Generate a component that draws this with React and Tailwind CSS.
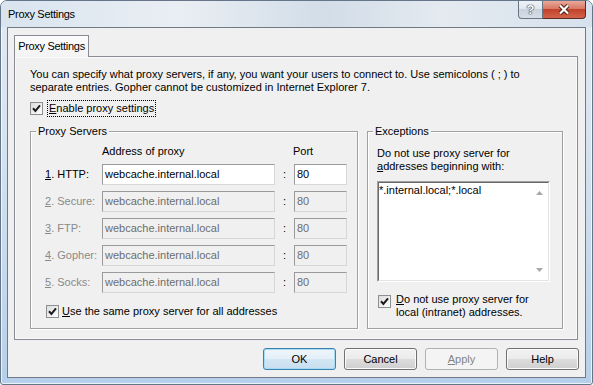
import React from 'react';

const font = "font-['Liberation_Sans',Arial,sans-serif]";

function Check() {
  return (
    <div className="w-[13px] h-[13px] shrink-0 border border-[#8e8f8f] bg-gradient-to-br from-[#dcdcdc] to-white flex items-center justify-center">
      <svg width="9" height="9" viewBox="0 0 9 9">
        <path d="M1 4.3L3.4 6.9L8 1.4" fill="none" stroke="#1c1c1c" strokeWidth="2" />
      </svg>
    </div>
  );
}

function Field({ value, disabled, className = '' }) {
  return (
    <div
      className={`h-[21px] flex items-center pl-[2px] border border-t-[#9a9a9a] border-l-[#9a9a9a] border-r-[#d6d6d6] border-b-[#d6d6d6] whitespace-nowrap ${
        disabled ? 'bg-[#f0f0f0] text-[#6d6d6d]' : 'bg-white text-black'
      } ${className}`}
    >
      {value}
    </div>
  );
}

function Btn({ children, isDefault, disabled }) {
  let look =
    'border-[#707070] bg-[linear-gradient(180deg,#f2f2f2_0%,#ebebeb_50%,#dddddd_50%,#cfcfcf_100%)] shadow-[inset_0_0_0_1px_#fbfbfb] text-black';
  if (isDefault)
    look =
      'border-[#3c7fb1] bg-[linear-gradient(180deg,#eef6fb_0%,#e4eff7_50%,#d3e6f3_50%,#c8def0_100%)] shadow-[inset_0_0_0_1px_#a6dcf5] text-black';
  if (disabled) look = 'border-[#adb2b5] bg-[#f4f4f4] text-[#838383]';
  return (
    <div className={`w-[73px] h-[22px] rounded-[3px] border flex items-center justify-center ${look}`}>
      {children}
    </div>
  );
}

function Group({ title, className = '', children }) {
  return (
    <div
      className={`relative h-[198px] border border-[#a0a0a0] shadow-[inset_1px_1px_0_#fff,1px_1px_0_#fff] ${className}`}
    >
      <span className="absolute -top-[7px] left-[5px] px-[2px] bg-[#f0f0f0] leading-[13px]">{title}</span>
      {children}
    </div>
  );
}

const rows = [
  { n: '1', label: '. HTTP:', on: true },
  { n: '2', label: '. Secure:' },
  { n: '3', label: '. FTP:' },
  { n: '4', label: '. Gopher:' },
  { n: '5', label: '. Socks:' },
];

export default function App() {
  return (
    <div
      className={`w-[593px] h-[385px] flex flex-col overflow-hidden rounded-t-[7px] rounded-b-[3px] border border-[#65768a] bg-[linear-gradient(180deg,#e2eaf2_0%,#d4e2f0_40%,#b6cfea_100%)] shadow-[inset_0_0_0_1px_rgba(255,255,255,0.7)] text-[11px] text-black ${font}`}
    >
      <div className="h-[26px] flex justify-between pl-[7px] pr-[6px] bg-[linear-gradient(90deg,#d9e4ef_0%,#e9eef3_30%,#d2dde8_55%,#e4eaf0_75%,#d6e1ed_100%)]">
        <div className="self-center leading-[14px] tracking-[-0.3px]">Proxy Settings</div>
        <div className="flex self-start h-[18px]">
          <div className="w-[25px] h-[18px] rounded-bl-[4px] border border-t-0 border-[#6a7684] bg-[linear-gradient(180deg,#eef2f6_0%,#dfe6ed_50%,#c9d3de_50%,#d6dee7_100%)] flex items-center justify-center text-[13px] font-bold text-white [text-shadow:0_0_1px_#2b3440,0_0_1px_#2b3440,0_0_1px_#2b3440]">
            ?
          </div>
          <div className="w-[43px] h-[18px] rounded-br-[4px] border border-t-0 border-l-0 border-[#5b2a22] bg-[linear-gradient(180deg,#e9a99b_0%,#d7735f_50%,#c2432b_50%,#d4624a_100%)] flex items-center justify-center">
            <svg width="14" height="11" viewBox="0 0 14 11">
              <path d="M3 1.5L11 9.5M11 1.5L3 9.5" stroke="#4a1c14" strokeWidth="4" />
              <path d="M3 1.5L11 9.5M11 1.5L3 9.5" stroke="#fff" strokeWidth="2.2" />
            </svg>
          </div>
        </div>
      </div>

      <div className="flex-1 px-[6px] pb-[6px] flex">
        <div className="flex-1 border border-[#707a85] bg-[#f0f0f0] flex flex-col pl-[6px] pr-[6px] pt-[7px]">
          <div className="flex h-[21px]">
            <div className="w-[75px] h-[22px] border border-b-0 border-[#898c95] bg-gradient-to-b from-[#fcfcfc] to-[#f3f3f3] flex items-center justify-center tracking-[-0.3px] relative z-10">
              Proxy Settings
            </div>
          </div>
          <div className="w-[564px] h-[284px] border border-[#898c95] bg-[#f0f0f0] shadow-[inset_0_0_0_1px_#fafafa] pl-[15px] pt-[11px]">
            <p className="leading-[13px] whitespace-nowrap">
              You can specify what proxy servers, if any, you want your users to connect to. Use semicolons ( ; ) to
              <br />
              separate entries. Gopher cannot be customized in Internet Explorer 7.
            </p>
            <div className="flex items-center h-[17px] mt-[6px] gap-[4px]">
              <Check />
              <span className="h-[17px] flex items-center px-px border border-dotted border-black leading-[13px]">
                <span className="underline">E</span>nable proxy settings
              </span>
            </div>

            <div className="flex items-start gap-[9px] mt-[14px]">
              <Group title="Proxy Servers" className="w-[328px]">
                <div className="pl-[14px] pt-[12px] grid grid-cols-[57px_173px_19px_53px] gap-y-[6px] items-center">
                  <div className="h-[14px]" />
                  <div className="h-[14px] leading-[14px]">Address of proxy</div>
                  <div className="h-[14px]" />
                  <div className="h-[14px] leading-[14px] -ml-px">Port</div>
                  {rows.map((r) => (
                    <React.Fragment key={r.n}>
                      <div className={`whitespace-nowrap ${r.on ? 'text-black' : 'text-[#8a8a8a]'}`}>
                        <span className="underline">{r.n}</span>
                        {r.label}
                      </div>
                      <Field value="webcache.internal.local" disabled={!r.on} />
                      <div className="text-center">:</div>
                      <Field value="80" disabled={!r.on} />
                    </React.Fragment>
                  ))}
                </div>
                <div className="flex items-center gap-[3px] h-[13px] mt-[12px] pl-[15px]">
                  <Check />
                  <span className="leading-[13px]">
                    <span className="underline">U</span>se the same proxy server for all addresses
                  </span>
                </div>
              </Group>

              <Group title="Exceptions" className="w-[196px]">
                <div className="pl-[9px] pt-[15px]">
                  <p className="leading-[13px]">
                    Do not use proxy server for
                    <br />
                    <span className="underline">a</span>ddresses beginning with:
                  </p>
                  <div className="mt-[8px] w-[173px] h-[101px] border border-t-[#a0a0a0] border-l-[#a0a0a0] border-r-white border-b-white">
                    <div className="h-full border border-t-[#696969] border-l-[#696969] border-r-[#e3e3e3] border-b-[#e3e3e3] bg-white flex">
                      <div className="flex-1 pt-[1px] leading-[13px] whitespace-nowrap">*.internal.local;*.local</div>
                      <div className="w-[17px] flex flex-col items-center justify-between py-[8px]">
                        <svg width="7" height="4" viewBox="0 0 7 4">
                          <path d="M0 4L3.5 0L7 4Z" fill="#a8a8a8" />
                        </svg>
                        <svg width="7" height="4" viewBox="0 0 7 4">
                          <path d="M0 0L7 0L3.5 4Z" fill="#a8a8a8" />
                        </svg>
                      </div>
                    </div>
                  </div>
                  <div className="flex items-start gap-[5px] mt-[11px] ml-[1px]">
                    <div className="mt-[2px]">
                      <Check />
                    </div>
                    <p className="leading-[13px]">
                      <span className="underline">D</span>o not use proxy server for
                      <br />
                      local (intranet) addresses.
                    </p>
                  </div>
                </div>
              </Group>
            </div>
          </div>

          <div className="flex justify-end gap-[8px] mt-[8px]">
            <Btn isDefault>OK</Btn>
            <Btn>Cancel</Btn>
            <Btn disabled>
              <span>
                <span className="underline">A</span>pply
              </span>
            </Btn>
            <Btn>Help</Btn>
          </div>
        </div>
      </div>
    </div>
  );
}
